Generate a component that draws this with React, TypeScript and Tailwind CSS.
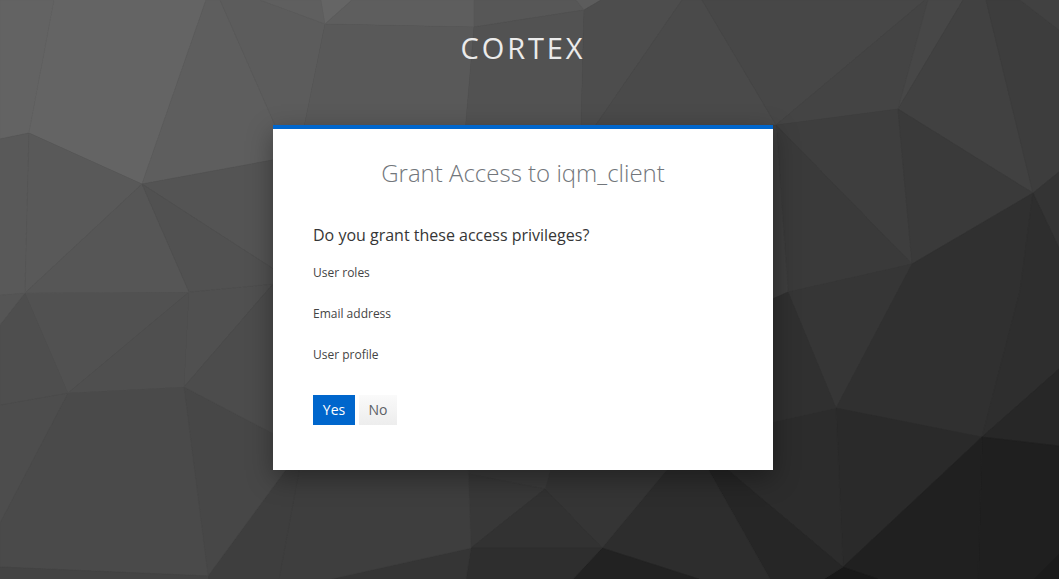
const facets: [string, string][] = [
  ["0,0 54,0 29,133 0,139", "#636363"],
  ["54,0 206,0 142,184 29,133", "#646464"],
  ["206,0 220,0 289,157 142,184", "#5e5e5e"],
  ["220,0 260,0 325,24 304,127 289,157", "#5c5c5c"],
  ["260,0 321,0 325,24", "#5f5f5f"],
  ["321,0 352,0 325,24", "#656565"],
  ["352,0 474,0 474,27 325,24", "#5e5e5e"],
  ["325,24 474,27 459,203 289,203 304,127", "#595959"],
  ["474,0 576,0 584,10 474,27", "#575757"],
  ["576,0 601,0 584,10", "#5c5c5c"],
  ["474,27 584,10 579,203 459,203", "#525252"],
  ["584,10 601,0 682,0 591,132 579,203", "#4d4d4d"],
  ["682,0 702,0 776,125 776,132 591,132", "#4a4a4a"],
  ["702,0 925,0 776,125", "#474747"],
  ["776,125 925,0 928,0 898,109", "#444444"],
  ["928,0 963,0 898,109", "#474747"],
  ["963,0 986,0 1033,193 898,109", "#414141"],
  ["986,0 1020,0 1059,30 1059,172 1033,193", "#3d3d3d"],
  ["1020,0 1059,0 1059,30", "#414141"],
  ["776,125 898,109 912,264", "#3e3e3e"],
  ["776,125 912,264 788,292", "#3a3a3a"],
  ["776,125 788,292 770,300 770,125", "#3e3e3e"],
  ["788,292 912,264 836,408", "#363636"],
  ["898,109 1033,193 912,264", "#3a3a3a"],
  ["912,264 1033,193 1020,291 982,437 836,408", "#303030"],
  ["1033,193 1059,172 1059,248", "#343434"],
  ["1033,193 1059,248 1059,369 982,437 1020,291", "#2e2e2e"],
  ["982,437 1059,369 1059,446", "#272727"],
  ["836,408 982,437 843,567", "#2a2a2a"],
  ["982,437 1059,446 1059,554 1034,579 978,579", "#1f1f1f"],
  ["1059,554 1059,579 1034,579", "#1b1b1b"],
  ["982,437 978,579 878,579 843,567", "#202020"],
  ["843,567 878,579 824,579", "#191919"],
  ["836,408 843,567 716,460 773,422", "#2c2c2c"],
  ["770,300 788,292 836,408 773,422", "#303030"],
  ["703,460 716,460 843,567 824,579 770,579", "#262626"],
  ["675,460 703,460 770,579 699,579 602,548", "#2d2d2d"],
  ["602,548 699,579 573,579", "#222222"],
  ["553,460 675,460 602,548 545,489", "#353535"],
  ["468,460 553,460 545,489 468,474", "#3a3a3a"],
  ["468,474 545,489 471,548", "#383838"],
  ["471,548 545,489 602,548", "#323232"],
  ["471,548 602,548 573,579 466,579", "#2e2e2e"],
  ["471,548 466,579 331,579", "#353535"],
  ["301,460 468,460 471,548 331,579 279,579", "#3e3e3e"],
  ["208,576 293,460 301,460 279,579 208,579", "#3e3e3e"],
  ["184,387 289,442 293,460 208,576", "#474747"],
  ["68,393 184,387 208,576 0,567 0,523", "#4a4a4a"],
  ["0,567 208,576 208,579 0,579", "#444444"],
  ["68,393 0,405 0,523", "#4d4d4d"],
  ["25,293 68,393 0,405 0,325", "#4e4e4e"],
  ["25,293 0,325 0,295", "#555555"],
  ["25,293 189,292 68,393", "#515151"],
  ["189,292 184,387 68,393", "#4f4f4f"],
  ["189,292 273,284 184,387", "#505050"],
  ["273,284 289,284 289,442 184,387", "#4c4c4c"],
  ["0,139 29,133 25,293 0,295", "#595959"],
  ["29,133 142,184 25,293", "#595959"],
  ["142,184 189,292 25,293", "#565656"],
  ["142,184 289,157 289,279", "#545454"],
  ["142,184 289,279 273,284 189,292", "#515151"],
];

const scopes = ["User roles", "Email address", "User profile"];

export default function App() {
  return (
    <div className="relative h-[579px] overflow-hidden bg-[#3a3a3a] font-['Open_Sans',sans-serif]">
      <svg className="absolute inset-0 blur-[0.6px]" width="1059" height="579" viewBox="0 0 1059 579">
        {facets.map(([points, color], index) => (
          <polygon key={index} points={points} fill={color} stroke={color} strokeWidth="0.5" />
        ))}
      </svg>
      <div className="relative flex w-[1046px] flex-col items-center">
        <h1 className="h-[125px] pt-[30px] text-[29px] leading-[35px] tracking-[0.1em] text-[#ebebeb]">
          CORTEX
        </h1>
        <div className="w-[500px] border-t-4 border-[#0066cc] bg-white px-10 pt-[29px] pb-[45px] shadow-[0_8px_24px_rgba(0,0,0,0.35)]">
          <h2 className="text-center text-2xl leading-[29px] font-light text-[#72767b]">
            Grant Access to iqm_client
          </h2>
          <h3 className="mt-[37px] text-base leading-[22px] text-[#363636]">
            Do you grant these access privileges?
          </h3>
          <ul className="mt-[17px] flex flex-col gap-[21px]">
            {scopes.map((scope) => (
              <li key={scope} className="text-xs leading-5 text-[#444444]">
                {scope}
              </li>
            ))}
          </ul>
          <div className="mt-[30px] flex gap-1">
            <button className="h-[30px] w-[42px] bg-[#0066cc] text-sm text-white">Yes</button>
            <button className="h-[30px] w-[38px] bg-gradient-to-b from-[#fafafa] to-[#ededed] text-sm text-[#5c6167]">
              No
            </button>
          </div>
        </div>
      </div>
    </div>
  );
}
